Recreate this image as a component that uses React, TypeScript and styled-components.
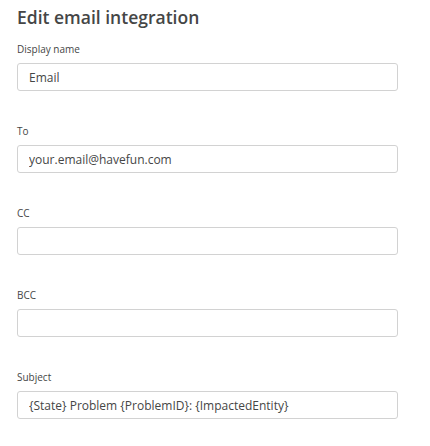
import React from "react";
import styled, { createGlobalStyle } from "styled-components";

const Global = createGlobalStyle`
  html, body { margin: 0; padding: 0; background: #ffffff; }
  body { font-family: "Open Sans", "DejaVu Sans", sans-serif; color: #454646; }
  * { box-sizing: border-box; }
`;

const Page = styled.div`
  padding: 6px 32px 0 17px;
  display: flex;
  flex-direction: column;
`;

const Title = styled.h1`
  margin: 0 0 14px 0;
  font-size: 17.5px;
  line-height: 22px;
  font-weight: 600;
  color: #454646;
`;

const Field = styled.div`
  display: flex;
  flex-direction: column;
  gap: 7px;
  margin-bottom: 33px;
`;

const Label = styled.label`
  font-size: 10px;
  line-height: 14px;
  color: #454646;
`;

const Input = styled.input`
  width: 100%;
  height: 28px;
  border: 1px solid #d2d2d2;
  border-radius: 3px;
  padding: 0 11px;
  font-family: "Open Sans", "DejaVu Sans", sans-serif;
  font-size: 12px;
  color: #454646;
  background: #fff;
  outline: none;
`;

const fields = [
  { label: "Display name", value: "Email" },
  { label: "To", value: "your.email@havefun.com" },
  { label: "CC", value: "" },
  { label: "BCC", value: "" },
  { label: "Subject", value: "{State} Problem {ProblemID}: {ImpactedEntity}" },
];

export default function App() {
  return (
    <>
      <Global />
      <Page>
        <Title>Edit email integration</Title>
        {fields.map((f) => (
          <Field key={f.label}>
            <Label>{f.label}</Label>
            <Input readOnly value={f.value} />
          </Field>
        ))}
      </Page>
    </>
  );
}
